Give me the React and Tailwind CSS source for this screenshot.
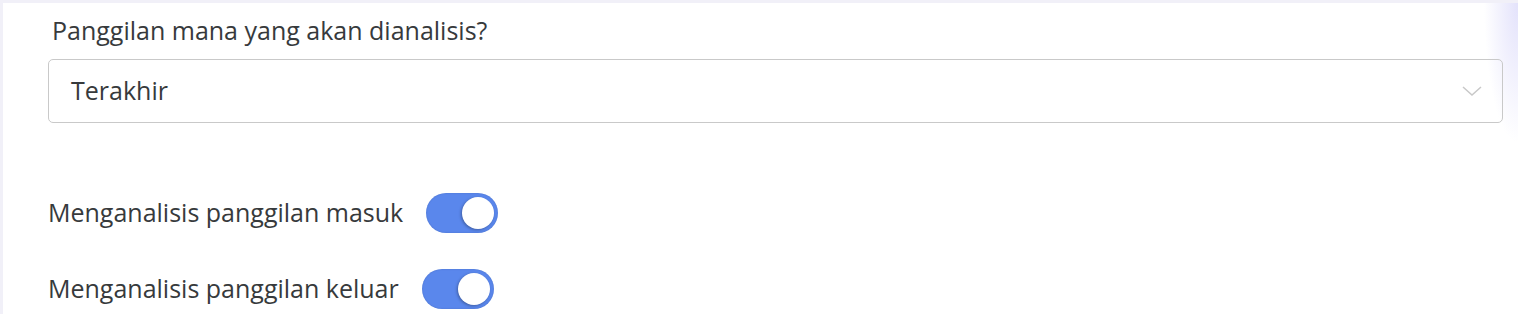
import React from 'react';

function Toggle() {
  return (
    <span className="relative inline-flex h-[40px] w-[72px] shrink-0 items-center rounded-full bg-[#5a87ec] shadow-[inset_0_0_2px_rgba(0,0,0,0.15)]">
      <span className="absolute right-[4px] h-[32px] w-[32px] rounded-full bg-white shadow-[-1px_1px_3px_rgba(0,0,0,0.3)]" />
    </span>
  );
}

export default function App() {
  return (
    <div className="h-[314px] w-full overflow-hidden bg-[#f1f0f8] pt-[3px] pl-[3px] font-['Open_Sans',sans-serif] text-[#373a3c]">
      <div className="h-full bg-white bg-[radial-gradient(ellipse_34px_140px_at_100%_0%,#e3e2fb,#ffffff00)] pl-[45px] pr-[15px]">
        <div className="pt-[12px] pl-[4px] text-[25px] leading-[30px]">Panggilan mana yang akan dianalisis?</div>
        <div className="mt-[14px] flex h-[64px] items-center justify-between rounded-[5px] border border-[#c9c9c9] pl-[22px] pr-[20px] text-[25px]">
          <span>Terakhir</span>
          <svg width="20" height="10" viewBox="0 0 20 10" fill="none" stroke="#c8c8c8" strokeWidth="1.5">
            <path d="M1 1l9 8 9-8" />
          </svg>
        </div>
        <div className="mt-[70px] flex items-center gap-[23px] text-[25px]">
          <span>Menganalisis panggilan masuk</span>
          <Toggle />
        </div>
        <div className="mt-[36px] flex items-center gap-[23px] text-[25px]">
          <span>Menganalisis panggilan keluar</span>
          <Toggle />
        </div>
      </div>
    </div>
  );
}
